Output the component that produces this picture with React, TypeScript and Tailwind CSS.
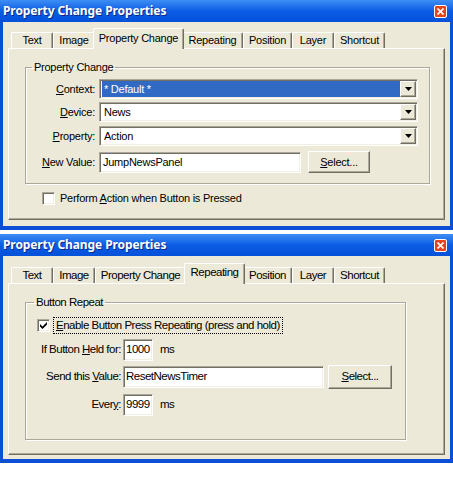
import type { ReactNode } from "react";

const sunken =
  "border border-t-[#ACA899] border-l-[#ACA899] border-b-white border-r-white shadow-[inset_1px_1px_0_#716F64,inset_-1px_-1px_0_#F1EFE2]";
const raised =
  "border border-t-white border-l-white border-b-[#716F64] border-r-[#716F64] shadow-[inset_-1px_-1px_0_#ACA899]";
const etched = "border border-[#ACA899] shadow-[inset_1px_1px_0_#fff,1px_1px_0_#fff]";

const TABS = ["Text", "Image", "Property Change", "Repeating", "Position", "Layer", "Shortcut"];
const TAB_W: Record<string, string> = {
  Text: "w-[42px]",
  Image: "w-[42px]",
  "Property Change": "w-[91px]",
  Repeating: "w-[61px]",
  Position: "w-[49px]",
  Layer: "w-[42px]",
  Shortcut: "w-[51px]",
};

const TitleBar = () => (
  <div className="h-[22px] flex items-center pl-[3px] pr-[6px] bg-linear-to-b from-[#3D8DF5] via-[#0B5CE4] to-[#0551DA]">
    <span className="text-white font-bold text-[12px] tracking-[-0.1px] [text-shadow:1px_1px_0_#0A2A8A]">
      Property Change Properties
    </span>
    <div className="ml-auto w-[13px] h-[13px] rounded-[2px] border border-white bg-[#E1471D] flex items-center justify-center">
      <svg width="7" height="7" viewBox="0 0 7 7">
        <path d="M0.5 0.5L6.5 6.5M6.5 0.5L0.5 6.5" stroke="#fff" strokeWidth="1.6" />
      </svg>
    </div>
  </div>
);

const TabStrip = ({ active }: { active: string }) => (
  <div className="h-[20px] flex items-end pl-[3px] relative z-10">
    {TABS.map((t) => {
      const on = t === active;
      return (
        <div
          key={t}
          className={
            TAB_W[t] +
            " flex items-center justify-center whitespace-nowrap border-l border-t border-l-white border-t-white border-r border-r-[#716F64] rounded-t-[2px] bg-[#ECE9D8] shadow-[inset_-1px_0_0_#ACA899] " +
            (on ? "h-[21px] -mx-[2px] -mb-px pb-[2px] relative" : "h-[16px]")
          }
        >
          {t}
        </div>
      );
    })}
  </div>
);

const Panel = ({ children }: { children: ReactNode }) => (
  <div className="h-[172px] border border-t-white border-l-white border-b-[#716F64] border-r-[#716F64] shadow-[inset_-1px_-1px_0_#ACA899] flex flex-col">
    {children}
  </div>
);

const Window = ({ font, children }: { font: string; children: ReactNode }) => (
  <div className="w-[453px] flex flex-col bg-[#0B4FD6]">
    <TitleBar />
    <div className={"mx-[3px] mb-[4px] px-[5px] bg-[#ECE9D8] text-black " + font}>{children}</div>
  </div>
);

const Arrow = () => (
  <div className={"w-[16px] h-[16px] mr-px bg-[#ECE9D8] flex items-center justify-center " + raised}>
    <svg width="7" height="4" viewBox="0 0 7 4">
      <polygon points="0,0 7,0 3.5,4" fill="#000" />
    </svg>
  </div>
);

const Combo = ({ value, selected }: { value: string; selected?: boolean }) => (
  <div className={"h-[20px] flex-1 bg-white flex items-center pl-[2px] " + sunken}>
    <div className={"flex-1 h-[16px] flex items-center pl-[2px] " + (selected ? "bg-[#316AC5] text-white" : "")}>
      {value}
    </div>
    <Arrow />
  </div>
);

const Row = ({ label, u, children, className }: { label: string; u: number; children: ReactNode; className?: string }) => (
  <div className={"flex items-center " + (className ?? "")}>
    <span className="w-[70px] text-right pr-[1px] whitespace-nowrap">
      {label.slice(0, u)}
      <u>{label[u]}</u>
      {label.slice(u + 1)}
    </span>
    <div className="flex-1 flex items-center ml-[3px]">{children}</div>
  </div>
);

const Field = ({ w, children }: { w: string; children: ReactNode }) => (
  <div className={w + " ml-[2px] h-[22px] bg-white flex items-center pl-[2px] " + sunken}>{children}</div>
);

export default function App() {
  return (
    <div className="w-[453px] h-[487px] bg-white flex flex-col gap-[4px]">
      <Window font="font-['Liberation_Sans',Arial,sans-serif] text-[11px] tracking-[-0.25px]">
        <div className="pt-[6px] pb-[6px]">
          <TabStrip active="Property Change" />
          <Panel>
            <fieldset className={"mt-[12px] ml-[16px] mr-[14px] pr-[11px] pb-[10px] " + etched}>
              <legend className="ml-[6px] px-[2px] leading-[12px]">Property Change</legend>
              <div className="flex flex-col pt-[6px]">
                <Row label="Context:" u={0}>
                  <Combo value="* Default *" selected />
                </Row>
                <Row label="Device:" u={0} className="mt-[3px]">
                  <Combo value="News" />
                </Row>
                <Row label="Property:" u={0} className="mt-[4px]">
                  <Combo value="Action" />
                </Row>
                <Row label="New Value:" u={0} className="mt-[5px]">
                  <div className={"w-[202px] h-[21px] bg-white flex items-center pl-[3px] " + sunken}>JumpNewsPanel</div>
                  <div className={"ml-[7px] w-[62px] h-[22px] bg-[#ECE9D8] flex items-center justify-center " + raised}>
                    <u>S</u>elect...
                  </div>
                </Row>
              </div>
            </fieldset>
            <div className="mt-[6px] ml-[33px] flex items-center">
              <div className={"w-[13px] h-[13px] bg-white " + sunken} />
              <span className="ml-[5px]">
                Perform <u>A</u>ction when Button is Pressed
              </span>
            </div>
          </Panel>
        </div>
      </Window>

      <Window font="font-['Liberation_Sans',Arial,sans-serif] text-[11.5px] tracking-[-0.5px]">
        <div className="pt-[7px] pb-[4px]">
          <TabStrip active="Repeating" />
          <Panel>
            <fieldset className={"mt-[12px] ml-[16px] mr-[38px] pb-[23px] " + etched}>
              <legend className="ml-[8px] px-[2px] leading-[12px]">Button Repeat</legend>
              <div className="flex items-center pt-[9px] pl-[11px]">
                <div className={"w-[13px] h-[13px] bg-white flex items-center justify-center " + sunken}>
                  <svg width="7" height="7" viewBox="0 0 7 7">
                    <path d="M0 2L0 4.5L2.5 7L7 2.5L7 0L2.5 4.5Z" fill="#000" />
                  </svg>
                </div>
                <span className="ml-[3px] h-[17px] px-[2px] flex items-center border border-dotted border-black">
                  <u>E</u>nable Button Press Repeating (press and hold)
                </span>
              </div>
              <div className="flex items-center mt-[5px]">
                <span className="w-[95px] text-right whitespace-nowrap">
                  If Button <u>H</u>eld for:
                </span>
                <Field w="w-[30px]">1000</Field>
                <span className="ml-[7px]">ms</span>
              </div>
              <div className="flex items-center mt-[4px]">
                <span className="w-[95px] text-right whitespace-nowrap">
                  Send this <u>V</u>alue:
                </span>
                <Field w="w-[201px]">ResetNewsTimer</Field>
                <div className={"ml-[4px] w-[64px] h-[24px] bg-[#ECE9D8] flex items-center justify-center " + raised}>
                  <u>S</u>elect...
                </div>
              </div>
              <div className="flex items-center mt-[5px]">
                <span className="w-[95px] text-right whitespace-nowrap">
                  Ever<u>y</u>:
                </span>
                <Field w="w-[30px]">9999</Field>
                <span className="ml-[7px]">ms</span>
              </div>
            </fieldset>
          </Panel>
        </div>
      </Window>
    </div>
  );
}
